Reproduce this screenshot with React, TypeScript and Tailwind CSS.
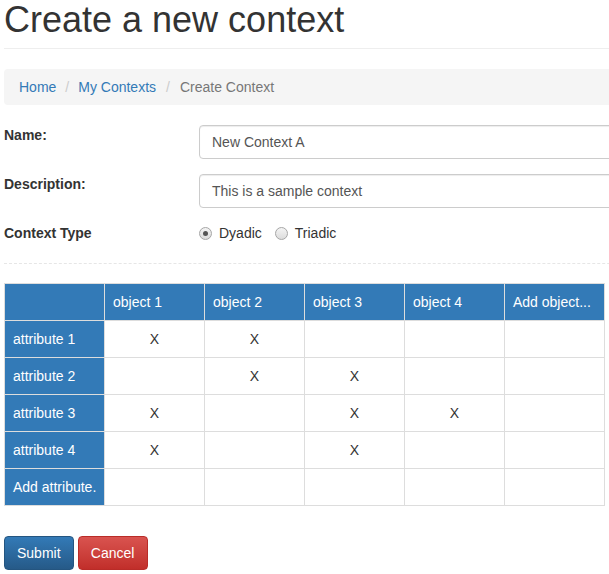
import React from "react";

const objects = ["object 1", "object 2", "object 3", "object 4", "Add object..."];

const rows = [
  { name: "attribute 1", marks: [true, true, false, false, false] },
  { name: "attribute 2", marks: [false, true, true, false, false] },
  { name: "attribute 3", marks: [true, false, true, true, false] },
  { name: "attribute 4", marks: [true, false, true, false, false] },
  { name: "Add attribute.", marks: [false, false, false, false, false] },
];

function Radio({ checked }: { checked?: boolean }) {
  return (
    <span className="w-[13px] h-[13px] rounded-full border border-[#a6a6a6] bg-gradient-to-b from-[#f4f4f4] to-[#dcdcdc] flex items-center justify-center shrink-0">
      {checked && <span className="w-[5px] h-[5px] rounded-full bg-[#555]" />}
    </span>
  );
}

export default function App() {
  return (
    <div className="w-[609px] h-[574px] overflow-hidden bg-white" style={{ fontFamily: '"Liberation Sans", Arial, sans-serif' }}>
      <div className="w-[680px] pl-[4px] text-[14px] leading-[20px] text-[#333]">
        <div className="pb-[8px] border-b border-[#eee]">
          <h1 className="text-[36px] leading-[40px] font-normal text-[#333] m-0">Create a new context</h1>
        </div>

        {/* Breadcrumb */}
        <ol className="mt-[20px] h-[36px] px-[15px] py-[8px] bg-[#f5f5f5] rounded-[4px] flex items-center">
          <li className="text-[#337ab7]">Home</li>
          <li className="px-[9px] text-[#ccc]">/</li>
          <li className="text-[#337ab7]">My Contexts</li>
          <li className="pl-[10px] pr-[10px] text-[#ccc]">/</li>
          <li className="text-[#777]">Create Context</li>
        </ol>

        {/* Form */}
        <div className="mt-[20px] flex flex-col">
          <div className="flex items-start">
            <label className="w-[195px] font-bold">Name:</label>
            <div className="flex-1 h-[34px] border border-[#ccc] rounded-[4px] px-[12px] flex items-center text-[#555] shadow-[inset_0_1px_1px_rgba(0,0,0,0.075)]">
              New Context A
            </div>
          </div>
          <div className="flex items-start mt-[15px]">
            <label className="w-[195px] font-bold">Description:</label>
            <div className="flex-1 h-[34px] border border-[#ccc] rounded-[4px] px-[12px] flex items-center text-[#555] shadow-[inset_0_1px_1px_rgba(0,0,0,0.075)]">
              This is a sample context
            </div>
          </div>
          <div className="flex items-center mt-[15px] h-[20px]">
            <label className="w-[195px] font-bold">Context Type</label>
            <div className="flex items-center">
              <Radio checked />
              <span className="ml-[7px]">Dyadic</span>
              <span className="ml-[13px]"><Radio /></span>
              <span className="ml-[7px]">Triadic</span>
            </div>
          </div>
        </div>

        <div className="mt-[20px] border-t border-dashed border-[#e6e6e6]" />

        {/* Context table */}
        <table className="mt-[19px] border-collapse w-[601px] table-fixed">
          <thead>
            <tr className="h-[37px]">
              <th className="w-[100px] bg-[#337ab7] border border-[#ddd]" />
              {objects.map((o) => (
                <th key={o} className="bg-[#337ab7] border border-[#ddd] text-white font-normal text-left px-[8px] whitespace-nowrap overflow-hidden">
                  {o}
                </th>
              ))}
            </tr>
          </thead>
          <tbody>
            {rows.map((r) => (
              <tr key={r.name} className="h-[37px]">
                <td className="bg-[#337ab7] border border-[#ddd] text-white px-[8px] whitespace-nowrap overflow-hidden">{r.name}</td>
                {r.marks.map((m, i) => (
                  <td key={i} className="border border-[#ddd] text-center">{m ? "X" : ""}</td>
                ))}
              </tr>
            ))}
          </tbody>
        </table>

        <div className="mt-[30px] flex gap-[4px]">
          <button className="h-[34px] px-[12px] rounded-[4px] border border-[#245580] text-white bg-gradient-to-b from-[#337ab7] to-[#265a88]">
            Submit
          </button>
          <button className="h-[34px] w-[70px] px-[12px] rounded-[4px] border border-[#b92c28] text-white bg-gradient-to-b from-[#d9534f] to-[#c12e2a]">
            Cancel
          </button>
        </div>
      </div>
    </div>
  );
}
